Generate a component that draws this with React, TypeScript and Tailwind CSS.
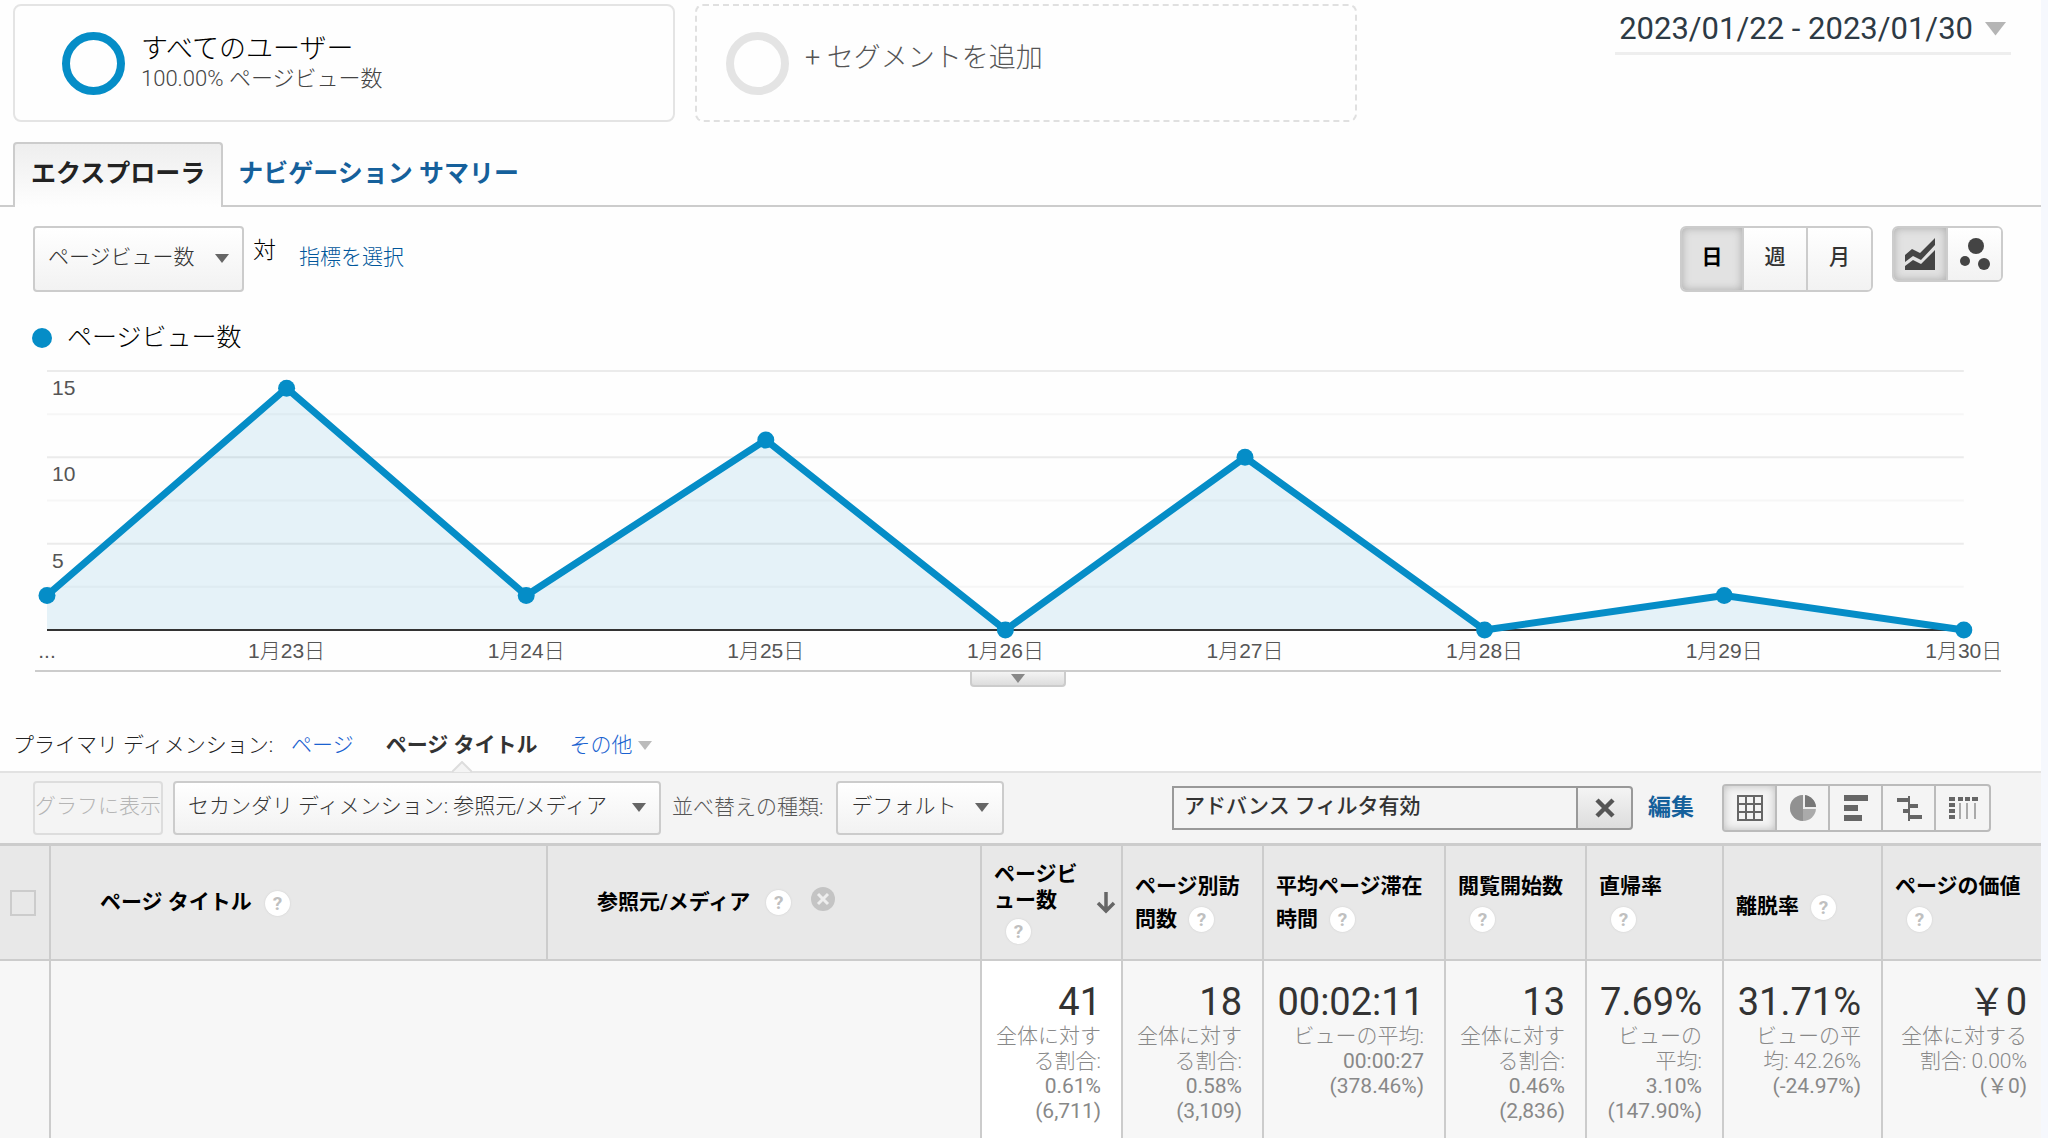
import { ReactNode } from "react";
import clsx from "clsx";

const days = [
  { label: "...", views: 2 },
  { label: "1月23日", views: 14 },
  { label: "1月24日", views: 2 },
  { label: "1月25日", views: 11 },
  { label: "1月26日", views: 0 },
  { label: "1月27日", views: 10 },
  { label: "1月28日", views: 0 },
  { label: "1月29日", views: 2 },
  { label: "1月30日", views: 0 },
];

const metrics = [
  { title: ["ページビ", "ュー数"], value: "41", notes: ["全体に対す", "る割合:", "0.61%", "(6,711)"], width: "w-[141px]", sorted: true },
  { title: ["ページ別訪", "問数"], value: "18", notes: ["全体に対す", "る割合:", "0.58%", "(3,109)"], width: "w-[141px]" },
  { title: ["平均ページ滞在", "時間"], value: "00:02:11", notes: ["ビューの平均:", "00:00:27", "(378.46%)"], width: "w-[182px]" },
  { title: ["閲覧開始数", ""], value: "13", notes: ["全体に対す", "る割合:", "0.46%", "(2,836)"], width: "w-[141px]" },
  { title: ["直帰率", ""], value: "7.69%", notes: ["ビューの", "平均:", "3.10%", "(147.90%)"], width: "w-[137px]" },
  { title: ["離脱率"], value: "31.71%", notes: ["ビューの平", "均: 42.26%", "(-24.97%)"], width: "w-[159px]" },
  { title: ["ページの価値", ""], value: "￥0", notes: ["全体に対する", "割合: 0.00%", "(￥0)"], width: "w-[160px]" },
];

function Caret({ className = "w-[14px] text-[#666]" }: { className?: string }) {
  return (
    <svg viewBox="0 0 14 9" className={clsx("shrink-0", className)} fill="currentColor" aria-hidden="true">
      <path d="M0 0h14L7 9z" />
    </svg>
  );
}

function Help() {
  return (
    <button
      type="button"
      aria-label="ヘルプ"
      className="inline-flex size-[25px] items-center justify-center rounded-full bg-white align-middle text-[19px] leading-none font-bold text-[#c0c0c0] shadow-[0_0_2px_#ccc]"
    >
      ?
    </button>
  );
}

function Dropdown({ id, label, value, className }: { id: string; label?: string; value: string; className: string }) {
  return (
    <div className={clsx("grid shrink-0 items-center rounded border-2 border-[#ccc] bg-linear-to-b from-white to-[#f2f2f2]", className)}>
      <select
        id={id}
        aria-label={label}
        className="h-full w-full appearance-none bg-transparent pb-[2px] pl-[13px] text-[21px] font-light text-[#333] outline-none [grid-area:1/1]"
      >
        <option>{value}</option>
      </select>
      <span className="pointer-events-none justify-self-end pr-[13px] pb-[2px] [grid-area:1/1]">
        <Caret />
      </span>
    </div>
  );
}

// Chart geometry, in viewBox units
const LEFT = 47;
const STEP = 239.6;
const BASE = 270;
const UNIT = 17.27;

function Chart() {
  const points = days.map((d, i) => ({ ...d, x: LEFT + i * STEP, y: BASE - d.views * UNIT }));
  const line = points.map((p) => `${p.x},${p.y}`).join(" ");
  const right = LEFT + STEP * 8;

  return (
    <svg viewBox="0 0 2041 310" className="block h-auto w-full" role="img" aria-label="ページビュー数">
      {[2.5, 7.5, 12.5].map((v) => (
        <path key={v} d={`M${LEFT} ${BASE - v * UNIT}H${right}`} stroke="#f6f6f6" strokeWidth="2" />
      ))}
      {[5, 10, 15].map((v) => (
        <path key={v} d={`M${LEFT} ${BASE - v * UNIT}H${right}`} stroke="#ebebeb" strokeWidth="2" />
      ))}
      <polygon points={`${LEFT},${BASE} ${line} ${right},${BASE}`} fill="#058dc7" fillOpacity="0.1" />
      <path d={`M${LEFT} ${BASE}H${right}`} stroke="#333" strokeWidth="2" />
      <polyline points={line} fill="none" stroke="#058dc7" strokeWidth="7" strokeLinejoin="round" />
      {points.map((p) => (
        <circle key={p.label} cx={p.x} cy={p.y} r="8.5" fill="#058dc7" />
      ))}
      <g fill="#555" fontSize="21" className="font-['Liberation_Sans','Noto_Sans_CJK_JP',sans-serif] font-light">
        {[5, 10, 15].map((v) => (
          <text key={v} x="52" y={BASE - v * UNIT + 24}>
            {v}
          </text>
        ))}
        {points.map((p) => (
          <text key={p.label} x={p.x} y="298" textAnchor="middle">
            {p.label}
          </text>
        ))}
      </g>
    </svg>
  );
}

const views: { name: string; icon: ReactNode }[] = [
  {
    name: "データ",
    icon: <path d="M1 1h24v24H1zM9 1v24M17 1v24M1 9h24M1 17h24" fill="none" stroke="#666" strokeWidth="2" />,
  },
  {
    name: "割合",
    icon: (
      <>
        <circle cx="13" cy="13" r="13" fill="#aaa" />
        <path d="M13 13V0a13 13 0 0 0 0 26z" fill="#777" opacity=".5" />
        <path d="M14 0a13 13 0 0 1 12 12H14z" fill="#777" />
        <path d="M14 0v13h12" fill="none" stroke="#eee" strokeWidth="2" />
      </>
    ),
  },
  { name: "パフォーマンス", icon: <path d="M1 0h24v6H1zM1 10h14v6H1zM1 20h18v6H1z" fill="#666" /> },
  { name: "比較", icon: <path d="M1 3h11v4H1zM12 1h2v25h-2zM14 9h8v4h-8zM7 14h6v4H7zM13 20h13v4H13z" fill="#666" /> },
  {
    name: "ピボット",
    icon: (
      <>
        <path d="M-1 2h6v4h-6zM8 2h5v4H8zM15 2h5v4h-5zM22 2h6v4h-6zM-1 8h6v4h-6zM-1 14h6v4h-6zM-1 20h6v4h-6z" fill="#666" />
        <path d="M10 8v16M17 8v16M25 8v16" stroke="#aaa" strokeWidth="2" />
      </>
    ),
  },
];

function Segments() {
  return (
    <header className="flex items-start gap-5 pt-1 pr-[30px] pl-[13px]">
      <section className="flex h-[118px] max-w-[662px] flex-1 items-center gap-4 rounded-lg border-2 border-[#e4e4e4] pl-[47px]">
        <span className="size-[63px] shrink-0 rounded-full border-8 border-[#058dc7]" />
        <div>
          <h2 className="text-[27px] leading-[32px] font-light text-black">すべてのユーザー</h2>
          <p className="text-[22px] leading-[28px] font-light text-[#444]">100.00% ページビュー数</p>
        </div>
      </section>
      <button
        type="button"
        className="flex h-[118px] max-w-[662px] flex-1 items-center gap-4 rounded-lg border-2 border-dashed border-[#e0e0e0] pl-[29px] text-[27px] font-light text-[#555]"
      >
        <span className="size-[63px] shrink-0 rounded-full border-8 border-[#e4e4e4]" />
        <span className="pb-[10px]">+ セグメントを追加</span>
      </button>
      <button
        type="button"
        className="ml-auto flex items-center gap-3 border-b-3 border-[#eee] pt-[6px] pr-[5px] pb-1 pl-1 text-[31px] leading-[38px] text-[#2d3a45]"
      >
        2023/01/22 - 2023/01/30
        <Caret className="w-[21px] text-[#b5b5b5]" />
      </button>
    </header>
  );
}

function Controls() {
  return (
    <div className="flex items-start pt-[19px] pr-[38px] pl-[33px]">
      <Dropdown id="metric" label="指標" value="ページビュー数" className="h-[66px] w-[211px]" />
      <span className="mt-2 ml-[9px] text-[23px] leading-[34px] font-light text-black">対</span>
      <a href="#metric" className="mt-[14px] ml-[23px] text-[21px] leading-[34px] font-light text-[#00569b]">
        指標を選択
      </a>
      <div className="ml-auto flex h-[66px] divide-x-2 divide-[#ccc] overflow-hidden rounded-md border-2 border-[#ccc] text-[21px] font-medium text-[#333]">
        <button type="button" aria-pressed="true" className="w-[62px] bg-[#e2e2e2] pb-[2px] font-bold text-black shadow-[inset_0_0_8px_#aaa]">
          日
        </button>
        <button type="button" className="w-[64px] bg-linear-to-b from-white to-[#f2f2f2] pb-[2px]">週</button>
        <button type="button" className="w-[63px] bg-linear-to-b from-white to-[#f2f2f2] pb-[2px]">月</button>
      </div>
      <div className="ml-[19px] flex h-[56px] divide-x-2 divide-[#ccc] overflow-hidden rounded-md border-2 border-[#ccc]">
        <button type="button" aria-label="折れ線グラフ" aria-pressed="true" className="flex w-[54px] items-center justify-center bg-[#e2e2e2] shadow-[inset_0_0_8px_#aaa]">
          <svg viewBox="0 0 30 32" className="w-[30px]" fill="#444">
            <path d="M0 17l7-6 8 4L30 0v7L16 22l-8-4-8 6zM0 28l8-6 8 4L30 12v20H0z" />
          </svg>
        </button>
        <button type="button" aria-label="モーション グラフ" className="flex w-[53px] items-center justify-center bg-linear-to-b from-white to-[#f2f2f2]">
          <svg viewBox="0 0 32 32" className="w-8" fill="#444">
            <circle cx="17" cy="8" r="8" />
            <circle cx="6" cy="23" r="5" />
            <circle cx="25" cy="26" r="6" />
          </svg>
        </button>
      </div>
    </div>
  );
}

function Toolbar() {
  return (
    <div className="flex h-[72px] items-center border-t-2 border-[#e2e2e2] bg-[#f4f4f4] pr-[50px] pl-[33px] text-[21px]">
      <button type="button" disabled className="h-[54px] w-[130px] shrink-0 rounded border-2 border-[#ddd] pb-[2px] font-light whitespace-nowrap text-[#b5b5b5]">
        グラフに表示
      </button>
      <Dropdown
        id="secondary"
        label="セカンダリ ディメンション"
        value="セカンダリ ディメンション: 参照元/メディア"
        className="ml-[10px] h-[54px] w-[488px]"
      />
      <label htmlFor="sort" className="ml-[11px] font-light whitespace-nowrap text-[#555]">
        並べ替えの種類:
      </label>
      <Dropdown id="sort" value="デフォルト" className="ml-[13px] h-[54px] w-[168px]" />
      <div className="ml-auto flex h-[44px]">
        <input
          type="text"
          aria-label="フィルタ"
          defaultValue="アドバンス フィルタ有効"
          className="w-[404px] border-2 border-r-0 border-[#999] bg-[#f4f4f4] pb-[2px] pl-[10px] font-medium text-[#333] outline-none"
        />
        <button type="button" aria-label="フィルタを解除" className="flex w-[57px] items-center justify-center rounded-r border-2 border-[#999] bg-linear-to-b from-[#f4f4f4] to-[#ddd]">
          <svg viewBox="0 0 20 20" className="w-5" stroke="#555" strokeWidth="4.5">
            <path d="M2 2l16 16M18 2L2 18" />
          </svg>
        </button>
      </div>
      <a href="#filter" className="ml-[15px] text-[23px] font-bold whitespace-nowrap text-[#15609b]">
        編集
      </a>
      <div className="ml-7 flex h-[48px] divide-x-2 divide-[#bbb] overflow-hidden rounded border-2 border-[#bbb]">
        {views.map(({ name, icon }, i) => (
          <button
            key={name}
            type="button"
            aria-label={name}
            className={clsx("flex w-[53px] items-center justify-center", i === 0 && "shadow-[inset_0_0_8px_#bbb]")}
          >
            <svg viewBox="0 0 26 26" className="w-[26px] overflow-visible">
              {icon}
            </svg>
          </button>
        ))}
      </div>
    </div>
  );
}

function Report() {
  return (
    <table className="w-full table-fixed border-separate border-spacing-0">
      <thead>
        <tr className="h-[118px] bg-[#e8e8e8] text-left text-[21px] text-black [&>th]:border-t-3 [&>th]:border-b-2 [&>th]:border-[#ccc] [&>th+th]:border-l-2">
          <th className="w-[49px] pl-[10px]">
            <input type="checkbox" aria-label="すべて選択" className="block size-[26px] appearance-none border-2 border-[#ccc]" />
          </th>
          <th className="w-[497px] pl-[49px]">
            ページ タイトル <span className="ml-2"><Help /></span>
          </th>
          <th className="pl-[49px]">
            <span className="flex items-center">
              参照元/メディア
              <span className="ml-4 flex"><Help /></span>
              <button type="button" aria-label="削除" className="mb-2 ml-5">
                <svg viewBox="0 0 24 24" className="w-6">
                  <circle cx="12" cy="12" r="12" fill="#c4c4c4" />
                  <path d="M7 7l10 10M17 7L7 17" stroke="#eee" strokeWidth="3" />
                </svg>
              </button>
            </span>
          </th>
          {metrics.map(({ title, width, sorted }) => (
            <th
              key={title[0]}
              className={clsx(
                width,
                "pl-3 whitespace-nowrap",
                sorted ? "leading-[26px]" : "leading-[33px]",
                title.length === 1 && "pt-2",
              )}
            >
              {sorted ? (
                <div className="flex items-center justify-between pr-[5px]">
                  <div>
                    {title[0]}
                    <br />
                    {title[1]}
                    <div className="mt-[6px] ml-3 flex"><Help /></div>
                  </div>
                  <svg viewBox="0 0 20 22" className="w-5" fill="none" stroke="#666" strokeWidth="3.5" aria-label="降順">
                    <path d="M10 0v19M2 11l8 8 8-8" />
                  </svg>
                </div>
              ) : (
                title.map((text, i) => (
                  <div key={i}>
                    {text}
                    {i === title.length - 1 && <span className="ml-3"><Help /></span>}
                  </div>
                ))
              )}
            </th>
          ))}
        </tr>
      </thead>
      <tbody>
        <tr className="bg-[#f7f7f7] align-top [&>td+td]:border-l-2 [&>td]:border-[#ccc]">
          <td />
          <td colSpan={2} />
          {metrics.map(({ title, value, notes, sorted }) => (
            <td
              key={title[0]}
              className={clsx("pt-[19px] pr-5 pb-[14px] text-right whitespace-nowrap last:pr-[14px]", sorted && "bg-white")}
            >
              <div className="text-[38px] leading-[44px] text-[#333]">{value}</div>
              <div className="text-[21px] leading-[25px] text-[#888]">
                {notes.map((note) => (
                  <div key={note} className={clsx(!/^[\d(]/.test(note) && "font-light")}>
                    {note}
                  </div>
                ))}
              </div>
            </td>
          ))}
        </tr>
      </tbody>
    </table>
  );
}

export default function App() {
  return (
    <div className="min-h-screen bg-[#f6f8fd] pr-[7px] font-[Roboto,'Noto_Sans_CJK_JP',sans-serif]" lang="ja">
      <main className="min-h-screen bg-[#fefefe]">
        <Segments />

        <nav className="mt-5 flex border-b-2 border-[#ccc] pl-[13px] text-[25px] font-bold">
          <a href="#explorer" className="-mb-[2px] rounded-t border-2 border-b-0 border-[#ccc] bg-linear-to-b from-[#eee] to-[#fefefe] px-4 pt-3 pb-[15px] leading-[36px] text-[#222]">
            エクスプローラ
          </a>
          <a href="#summary" className="px-[15px] pt-[14px] leading-[36px] text-[#15609b]">
            ナビゲーション サマリー
          </a>
        </nav>

        <Controls />

        <div className="flex items-center gap-[15px] pt-7 pl-8 text-[25px] leading-[36px] font-light text-black">
          <span className="size-5 rounded-full bg-[#058dc7]" />
          ページビュー数
        </div>
        <div className="pt-1">
          <Chart />
        </div>
        <div className="mr-10 ml-[35px] border-t-2 border-[#ccc]">
          <button type="button" aria-label="グラフを開閉" className="mx-auto flex h-[15px] w-[96px] items-center justify-center rounded-b border-2 border-t-0 border-[#ccc] bg-linear-to-b from-[#f4f4f4] to-[#ddd]">
            <Caret className="w-[14px] text-[#888]" />
          </button>
        </div>

        <div className="flex h-[84px] items-end pl-[13px] text-[21px] leading-[52px] font-light whitespace-nowrap text-[#222]">
          プライマリ ディメンション:
          <a href="#page" className="ml-[18px] text-[#1a62d0]">ページ</a>
          <span className="relative ml-[32px] font-bold text-[#333]">
            ページ タイトル
            <svg viewBox="0 0 20 12" className="absolute -bottom-[2px] left-1/2 w-5 -translate-x-1/2" fill="#f4f4f4" stroke="#ddd" strokeWidth="2">
              <path d="M0 11L10 1l10 10" />
            </svg>
          </span>
          <button type="button" className="ml-[32px] flex items-center gap-[6px] text-[#1a62d0]">
            その他
            <Caret className="w-[14px] text-[#bbb]" />
          </button>
        </div>

        <Toolbar />
        <Report />
      </main>
    </div>
  );
}
